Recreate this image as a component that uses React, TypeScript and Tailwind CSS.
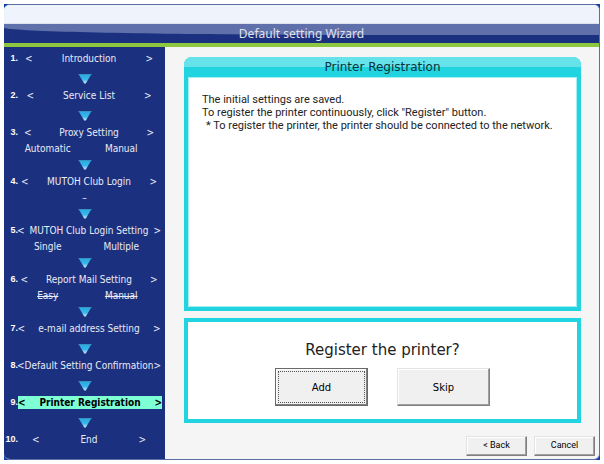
import clsx from "clsx"

interface Step {
  label: string
  spread: string
  options?: string[]
  skipped?: boolean
  current?: boolean
}

const steps: Step[] = [
  { label: "Introduction", spread: "w-[128px]" },
  { label: "Service List", spread: "w-[125px]" },
  { label: "Proxy Setting", spread: "w-[130px]", options: ["Automatic", "Manual"] },
  { label: "MUTOH Club Login", spread: "w-[136px]", options: ["–"] },
  { label: "MUTOH Club Login Setting", spread: "w-[144px]", options: ["Single", "Multiple"] },
  { label: "Report Mail Setting", spread: "w-[137px]", options: ["Easy", "Manual"], skipped: true },
  { label: "e-mail address Setting", spread: "w-[143px]" },
  { label: "Default Setting Confirmation", spread: "w-[144px]" },
  { label: "Printer Registration", spread: "w-[144px]", current: true },
  { label: "End", spread: "w-[114px]" },
]

function Arrow() {
  return (
    <svg width="14" height="10" viewBox="0 0 14 10" className="mx-auto block" aria-hidden="true">
      <defs>
        <linearGradient id="arrow" x1="0" y1="0" x2="0" y2="1">
          <stop offset="0" stopColor="#27a6e0" />
          <stop offset="0.6" stopColor="#3cb8ea" />
          <stop offset="1" stopColor="#c8ecf9" />
        </linearGradient>
      </defs>
      <path d="M0.5 0h13L7.8 9.4h-1.6z" fill="url(#arrow)" />
      <path d="M0.5 0.4h13" stroke="#3b8fae" strokeWidth="0.8" />
    </svg>
  )
}

function StepItem({ step, index, last }: { step: Step; index: number; last: boolean }) {
  return (
    <li aria-current={step.current ? "step" : undefined}>
      <div className="flex h-[14px] items-center">
        <span className="flex w-[14px] shrink-0 justify-end font-['Liberation_Sans',sans-serif] text-[9px] leading-[14px] font-bold text-white">
          {index + 1}.
        </span>
        <div
          className={clsx(
            "mr-[3px] flex h-[13px] min-w-0 flex-1 justify-center leading-[13px] whitespace-nowrap",
            step.current ? "bg-[#7fffd4] font-bold text-black" : "pr-[2px]"
          )}
        >
          <div className={clsx("flex shrink-0 justify-between", step.spread)}>
            <span>&lt;</span>
            <span>{step.label}</span>
            <span>&gt;</span>
          </div>
        </div>
      </div>

      {step.options && (
        <div className="mx-[7px] mt-[3px] flex h-[14px] leading-[14px]">
          {step.options.map((option) => (
            <span key={option} className={clsx("flex-1 text-center", step.skipped && "line-through")}>
              {option}
            </span>
          ))}
        </div>
      )}

      {!last && (
        <div className={clsx("pb-1", step.options ? "pt-1" : "pt-[9px]")}>
          <Arrow />
        </div>
      )}
    </li>
  )
}

const raised =
  "border border-t-[#e3e3e3] border-l-[#e3e3e3] border-r-[#808080] border-b-[#808080] bg-[#f0f0f0] text-black shadow-[inset_-1px_-1px_0_#a0a0a0,inset_1px_1px_0_#ffffff]"

export default function App() {
  return (
    <div className="flex min-h-screen flex-col bg-white p-1 font-['DejaVu_Sans_Condensed','DejaVu_Sans',sans-serif] text-[10px]">
      <div className="flex flex-1 flex-col bg-[#0b3fae]">
        <div className="flex flex-1 flex-col overflow-hidden rounded-md border border-l-0 border-[#5b6fa6] bg-[#f5f5f5]">

          {/* Title bar */}
          <div className="h-[19px] border-b border-[#dfe2ee] bg-[#eff3fb]" />
          <header className="relative h-[19px] bg-[#1b307f]">
            <svg className="absolute inset-0 h-full w-full" viewBox="0 0 596 19" preserveAspectRatio="none" aria-hidden="true">
              <path d="M0 0H596V11H400C230 11 20 9 0 4z" fill="#6070aa" />
            </svg>
            <h1 className="relative text-center font-['Noto_Sans',sans-serif] text-[12px] leading-5 text-[#e0e2ea]">
              Default setting Wizard
            </h1>
          </header>
          <div className="h-1 bg-[#8dc63f]" />

          <div className="flex flex-1">
            {/* Step list */}
            <nav className="w-[161px] shrink-0 bg-[#1b307f] pt-1 text-[#e8ebf5]">
              <ol>
                {steps.map((step, i) => (
                  <StepItem key={step.label} step={step} index={i} last={i === steps.length - 1} />
                ))}
              </ol>
            </nav>

            <main className="flex flex-1 flex-col pt-[10px] pb-[3px]">
              <section className="mr-[18px] ml-[19px] flex flex-1 flex-col overflow-hidden rounded-t-lg bg-[#22d3e0]">
                <h2 className="h-5 bg-linear-to-b from-[#66e2ea] from-50% to-[#22d3e0] to-50% text-center font-['DejaVu_Sans',sans-serif] text-[12px] leading-5 text-[#06343c]">
                  Printer Registration
                </h2>
                <div className="mx-1 mb-1 flex-1 border border-[#a5eef3] bg-white px-[13px] pt-[15px] font-['Roboto',sans-serif] text-[11px] leading-[13px] text-[#222222]">
                  <p>The initial settings are saved.</p>
                  <p>To register the printer continuously, click "Register" button.</p>
                  <p className="pl-1">* To register the printer, the printer should be connected to the network.</p>
                </div>
              </section>

              <section className="mt-[7px] mr-[18px] ml-[19px] border-4 border-[#22d3e0] bg-white pt-4 pb-[13px] text-center font-['DejaVu_Sans',sans-serif]">
                <h2 className="text-[15px] leading-6 text-[#222222]">Register the printer?</h2>
                <div className="mt-[6px] flex justify-center gap-[29px]">
                  <button
                    type="button"
                    className="h-[38px] w-[93px] border border-[#696969] bg-[#f0f0f0] p-[2px] text-[10px] text-black shadow-[inset_-1px_-1px_0_#808080,inset_1px_1px_0_#ffffff]"
                  >
                    <span className="flex h-full items-center justify-center border border-dotted border-[#555555]">Add</span>
                  </button>
                  <button type="button" className={clsx(raised, "h-[38px] w-[93px] text-[10px]")}>
                    Skip
                  </button>
                </div>
              </section>

              <footer className="mt-[13px] mr-[4px] flex justify-end gap-[7px] font-['Roboto',sans-serif] text-[9px]">
                <button type="button" className={clsx(raised, "h-5 w-[61px]")}>&lt; Back</button>
                <button type="button" className={clsx(raised, "h-5 w-[61px]")}>Cancel</button>
              </footer>
            </main>
          </div>
        </div>
      </div>
    </div>
  )
}
